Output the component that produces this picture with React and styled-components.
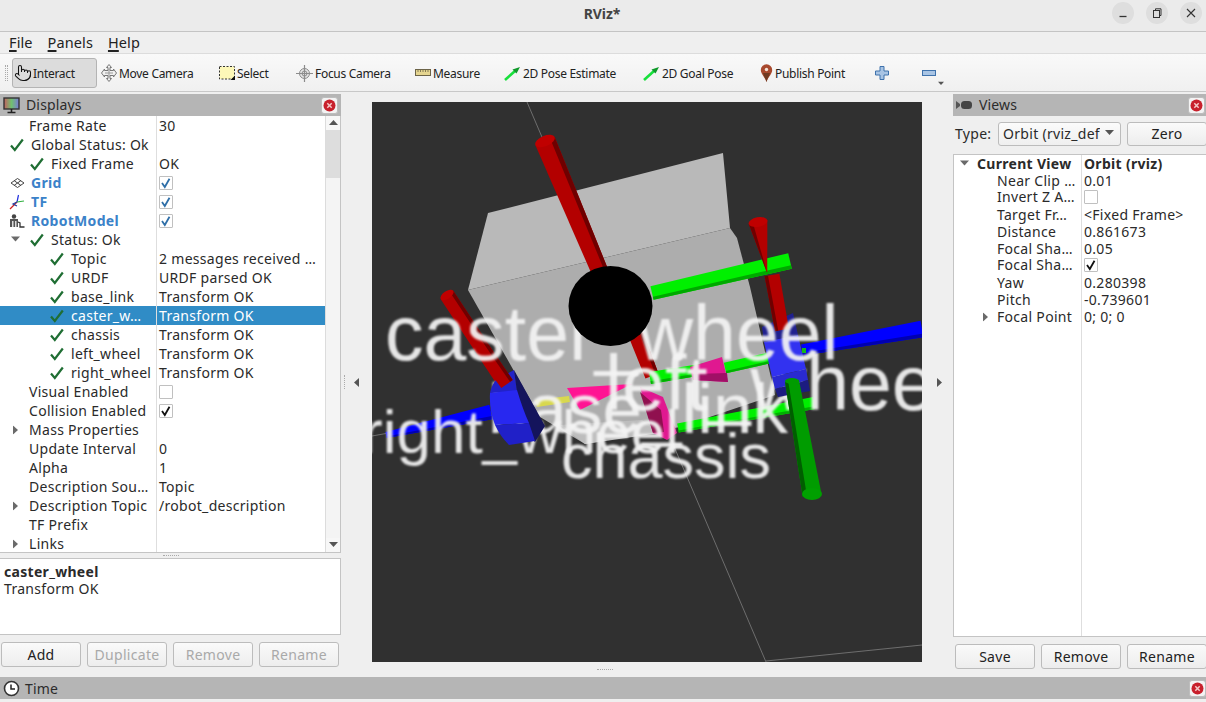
import React from "react";
import styled, { createGlobalStyle } from "styled-components";
import { Pointer } from "lucide-react";

const Global = createGlobalStyle`
  html, body { margin: 0; padding: 0; background: #efefef; overflow: hidden; }
  * { box-sizing: border-box; }
  #root { width: 1206px; height: 702px; overflow: hidden; }
`;

const Root = styled.div`
  width: 1206px; height: 702px; overflow: hidden; display: flex; flex-direction: column;
  font-family: "Noto Sans", "Open Sans", sans-serif; font-size: 14px; letter-spacing: .3px; color: #2a2a2a; background: #efefef;
`;
const TitleBar = styled.header`
  height: 32px; flex: none; background: #ebebeb; border-bottom: 1px solid #c4c4c4; position: relative;
  display: flex; align-items: center; justify-content: center; padding: 0 2px 4px 0; letter-spacing: 0;
`;
const Title = styled.div`
  font-weight: 700; font-size: 14px; color: #444; letter-spacing: -0.1px;
`;
const WinButtons = styled.div`
  position: absolute; right: 4px; top: 2px; display: flex; gap: 12px;
`;
const WinButton = styled.div`
  width: 22px; height: 22px; border-radius: 50%; background: #dedede; display: flex; align-items: center; justify-content: center;
`;
const MenuBar = styled.nav`
  height: 22px; flex: none; background: #efefef; border-bottom: 1px solid #dcdcdc; display: flex; gap: 15px; padding: 0 0 2px 9px; align-items: center;
  font-size: 14.5px; letter-spacing: .1px;
`;
const Menu = styled.span`
  color: #222; u { text-decoration-thickness: 2px; text-underline-offset: 2px; }
`;
const ToolBar = styled.div`
  height: 38px; flex: none; display: flex; align-items: center; padding: 1px 0 0 5px; border-bottom: 1px solid #c8c8c8;
  background: linear-gradient(#f9f9f9, #f0f0f0); font-size: 12px; letter-spacing: -.3px; color: #222;
`;
const Grip = styled.div`
  height: 16px; width: 3px; margin-right: 4px; border-left: 1px dotted #aaa; border-right: 1px dotted #aaa;
`;
const Tool = styled.div`
  width: ${p => p.$w}px; height: 30px; flex: none; display: flex; align-items: center; gap: ${p => p.$gap ?? 2}px; padding-left: ${p => p.$pad ?? 2}px;
  white-space: nowrap;
  ${p => p.$active && `background:#dcdcdc;border:1px solid #b4b4b4;border-radius:3px;`}
`;
const MoreTri = styled.span`
  align-self: flex-end; margin-bottom: 4px; display: flex;
  svg { width: 6px; height: 6px; }
`;
const Main = styled.div`
  width: 1208px; height: 585px; flex: none; display: flex; padding-top: 2px;
`;
const Dock = styled.section`
  width: ${p => p.$w}px; flex: none; display: flex; flex-direction: column;
`;
const DockTitle = styled.div`
  height: 22px; flex: none; background: #b5b5b5; display: flex; align-items: center; gap: 5px; padding: 0 0 0 3px; font-size: 14px; letter-spacing: .15px; color: #2c2c2c;
  justify-content: flex-start;
`;
const TitleText = styled.span`
  margin-top: ${p => p.$up ?? 2}px;
  margin-top: -${p => p.$up ?? 2}px;
`;
const CloseWrap = styled.div`
  margin-left: auto; margin-right: 3px; width: 17px; height: 17px; background: #f3f3f3; border: 1px solid #bdbdbd; border-radius: 3px;
  display: flex; align-items: center; justify-content: center;
`;
const TreeFrame = styled.div`
  flex: none; height: ${p => p.$h}px; background: #fff; border: 1px solid #c4c4c4; border-top: none; border-left: none; display: flex; overflow: hidden;
  ${p => p.$boxed && `border: 1px solid #c4c4c4;`}
`;
const Rows = styled.div`
  flex: 1; display: flex; flex-direction: column; min-width: 0; position: relative; margin-top: ${p => p.$top ?? 0}px;
`;
const Row = styled.div`
  height: ${p => p.$h}px; flex: none; display: grid; grid-template-columns: ${p => p.$col}px 1fr; align-items: center;
  background: ${p => (p.$sel ? "#308cc6" : "transparent")}; color: ${p => (p.$sel ? "#fff" : "inherit")}; white-space: nowrap;
`;
const FillRow = styled(Row)`
  flex: 1;
`;
const NameCell = styled.div`
  height: 100%; border-right: 1px solid #dedede; display: flex; align-items: center; position: relative; overflow: hidden;
  padding-left: ${p => p.$x}px; font-weight: ${p => (p.$bold ? 700 : 400)}; color: ${p => (p.$blue ? "#3b82c9" : "inherit")};
`;
const ValueCell = styled.div`
  height: 100%; display: flex; align-items: center; padding-left: 2px; font-weight: ${p => (p.$bold ? 700 : 400)};
`;
const IconSlot = styled.span`
  position: absolute; left: ${p => p.$x}px; top: 50%; transform: translateY(-50%); display: flex;
`;
const CheckBox = styled.span`
  width: 14px; height: 14px; background: #fff; border: 1px solid #c0c0c0; border-radius: 1px; display: flex; align-items: center; justify-content: center;
`;
const ScrollBar = styled.div`
  width: 15px; flex: none; display: flex; flex-direction: column; background: #f4f4f4; border-left: 1px solid #dcdcdc;
`;
const ScrollArrow = styled.div`
  height: 14px; flex: none; display: flex; align-items: center; justify-content: center; background: #f7f7f7;
`;
const Thumb = styled.div`
  height: 48px; flex: none; background: #dddddd;
`;
const ScrollGap = styled.div`
  flex: 1;
`;
const HSplit = styled.div`
  height: 5px; flex: none; display: flex; align-items: center; justify-content: center;
`;
const Dots = styled.div`
  width: 16px; height: 2px; border-top: 1px dotted #aaa;
`;
const Description = styled.div`
  height: 77px; flex: none; background: #fff; border: 1px solid #c4c4c4; border-left: none; padding: 4px 4px; line-height: 17px;
  b { display: block; font-weight: 700; }
`;
const ButtonRow = styled.div`
  display: flex; gap: 6px; padding: ${p => p.$pad};
`;
const Btn = styled.button`
  width: 80px; height: 25px; flex: none; border: 1px solid #bcbcbc; border-radius: 3px; background: linear-gradient(#fafafa, #ededed);
  font: inherit; letter-spacing: inherit; color: ${p => (p.disabled ? "#a9a9a9" : "#222")}; padding: 0;
`;
const TypeRow = styled.div`
  height: 24px; flex: none; margin: 6px 0 8px; display: flex; align-items: center; padding-left: 2px; gap: 6px;
`;
const TypeLabel = styled.span`
  width: 37px; flex: none; margin-top: -2px;
`;
const Combo = styled.div`
  width: 123px; height: 24px; flex: none; border: 1px solid #bcbcbc; border-radius: 3px; background: linear-gradient(#fbfbfb, #efefef); display: flex; align-items: center; gap: 5px; padding: 0 6px 2px 4px; overflow: hidden; white-space: nowrap;
  span { flex: 1; min-width: 0; overflow: hidden; }
`;
const ZeroBtn = styled(Btn)`
  height: 24px; padding-bottom: 2px;
`;
const Center = styled.div`
  width: 612px; flex: none; display: flex; flex-direction: column; padding-top: 8px;
`;
const CenterRow = styled.div`
  height: 560px; flex: none; display: flex;
`;
const SideSplit = styled.div`
  width: 31px; flex: none; display: flex; align-items: center; gap: 8px; padding-left: ${p => p.$pad}px;
`;
const VGrip = styled.div`
  height: 14px; width: 1px; border-left: 1px dotted #aaa;
`;
const Viewport = styled.div`
  width: 550px; height: 560px; flex: none; background: #303030; overflow: hidden;
`;
const SceneSvg = styled.svg`
  display: block;
`;
const BottomHandle = styled.div`
  flex: 1; display: flex; align-items: center; justify-content: center; padding-right: 84px;
`;
const TimeBar = styled(DockTitle)`
  width: 1206px;
  ${CloseWrap} { margin-right: 0; }
`;

const Check = ({ c = "#1f6e33", s = 14 }) => (
  <svg width={s} height={s} viewBox="0 0 14 14"><path d="M1 7.5 L4.8 12 L12.8 1.5" fill="none" stroke={c} strokeWidth="2.2" /></svg>
);
const Box = ({ on, c = "#2f6fa8" }) => (
  <CheckBox>{on && <svg width="12" height="12" viewBox="0 0 12 12"><path d="M2 6 L4.8 10 L9.5 1.8" fill="none" stroke={c} strokeWidth="1.8" /></svg>}</CheckBox>
);
const Tri = ({ dir, c = "#6a6a6a" }) => {
  const d = { down: "M0 1 H9 L4.5 6 Z", right: "M2 0 L7 4.5 L2 9 Z", left: "M6 0 V9 L1 4.5 Z", up: "M0 6 H9 L4.5 1 Z" }[dir];
  return <svg width="9" height="9" viewBox="0 0 9 9"><path d={d} fill={c} /></svg>;
};
const Close = () => (
  <CloseWrap>
    <svg width="13" height="13" viewBox="0 0 13 13">
      <circle cx="6.5" cy="6.5" r="6" fill="#c8202c" />
      <path d="M4.3 4.3 L8.7 8.7 M8.7 4.3 L4.3 8.7" stroke="#f4c8c8" strokeWidth="1.5" />
    </svg>
  </CloseWrap>
);
const MonitorIcon = () => (
  <svg width="18" height="17" viewBox="0 0 18 17">
    <defs><linearGradient id="mon" x1="0" x2="1"><stop offset="0" stopColor="#c46060" /><stop offset=".5" stopColor="#70c070" /><stop offset="1" stopColor="#7a7ad8" /></linearGradient></defs>
    <rect x="1" y="1" width="15" height="11" fill="url(#mon)" stroke="#333" strokeWidth="1.4" />
    <path d="M8.5 12 V15 M4.5 15.5 H12.5" stroke="#222" strokeWidth="1.6" />
  </svg>
);
const ClockIcon = () => (
  <svg width="17" height="17" viewBox="0 0 17 17"><circle cx="8.5" cy="8.5" r="7" fill="#fff" stroke="#333" strokeWidth="1.6" /><path d="M8 4.5 V9 H12" fill="none" stroke="#222" strokeWidth="1.5" /></svg>
);
const CameraIcon = () => (
  <svg width="18" height="14" viewBox="0 0 18 14"><path d="M0 3 L4 6 V8 L0 11 Z" fill="#555" /><rect x="5" y="3" width="11" height="8" rx="3.5" fill="#444" /></svg>
);
const MoveIcon = () => (
  <svg width="16" height="18" viewBox="0 0 16 18" fill="none" stroke="#777" strokeWidth="1">
    <path d="M8 .5 L10.5 3.5 H9 V6.5 H12.5 V5 L15.5 9 L12.5 13 V11.5 H9 V14.5 H10.5 L8 17.5 L5.5 14.5 H7 V11.5 H3.5 V13 L.5 9 L3.5 5 V6.5 H7 V3.5 H5.5 Z" fill="#f1f1f1" />
    <path d="M4 9 H12 M8 5 V13" stroke="#999" />
  </svg>
);
const SelectIcon = () => (
  <svg width="16" height="14" viewBox="0 0 16 14">
    <rect x=".5" y=".5" width="15" height="12.5" fill="#fdf8b8" stroke="#333" strokeDasharray="2 1.5" />
    <path d="M16 9.5 V14 H11.5 Z" fill="#111" />
  </svg>
);
const FocusIcon = () => (
  <svg width="17" height="17" viewBox="0 0 17 17" fill="none" stroke="#8c8c8c">
    <circle cx="8.5" cy="8.5" r="5" fill="#e4e4e4" />
    <path d="M8.5 0 V17 M0 8.5 H17" strokeWidth="1.2" />
    <circle cx="8.5" cy="8.5" r="2.5" />
  </svg>
);
const MeasureIcon = () => (
  <svg width="16" height="8" viewBox="0 0 16 8">
    <rect x=".5" y=".5" width="15" height="6" fill="#e5d590" stroke="#6c6448" />
    <path d="M3 1 V3 M5.5 1 V3 M8 1 V3 M10.5 1 V3 M13 1 V3" stroke="#6c6448" strokeWidth=".8" />
  </svg>
);
const PoseIcon = () => (
  <svg width="17" height="15" viewBox="0 0 17 15">
    <path d="M1 14 L11 5" stroke="#18e03c" strokeWidth="2.6" />
    <path d="M16 1 L8.5 3.5 L12.5 7.5 Z" fill="#0f9a2a" />
  </svg>
);
const PinIcon = () => (
  <svg width="13" height="18" viewBox="0 0 13 18">
    <path d="M6.5 18 C5 13 .8 10 .8 6 A5.7 5.7 0 0 1 12.2 6 C12.2 10 8 13 6.5 18 Z" fill="#a8492e" />
    <path d="M6.5 18 C5.6 14 3.5 12 3 9 H10 C9.5 12 7.4 14 6.5 18 Z" fill="#6f3a22" />
    <circle cx="6.5" cy="5.5" r="1.7" fill="#f3e4d8" />
  </svg>
);
const PlusIcon = () => (
  <svg width="14" height="14" viewBox="0 0 14 14"><path d="M5 .5 H9 V5 H13.5 V9 H9 V13.5 H5 V9 H.5 V5 H5 Z" fill="#a8c4e4" stroke="#3f72ac" /></svg>
);
const MinusIcon = () => (
  <svg width="14" height="6" viewBox="0 0 14 6"><rect x=".5" y=".5" width="13" height="5" fill="#a8c4e4" stroke="#3f72ac" /></svg>
);
const GridIcon = () => (
  <svg width="15" height="11" viewBox="0 0 15 11" fill="none" stroke="#444"><path d="M7.5 1 L14 5.5 L7.5 10 L1 5.5 Z M4.2 3.2 L10.8 7.8 M10.8 3.2 L4.2 7.8" /></svg>
);
const TfIcon = () => (
  <svg width="16" height="16" viewBox="0 0 16 16" fill="none" strokeWidth="1.2">
    <path d="M8 8 L9.5 1" stroke="#2030e0" /><path d="M8 8 L15 7" stroke="#30b040" />
    <path d="M8 8 L1 15" stroke="#d02020" /><path d="M8 8 L4 10 L8 12" stroke="#2040a0" />
  </svg>
);
const RobotIcon = () => (
  <svg width="16" height="16" viewBox="0 0 16 16">
    <circle cx="5" cy="3.5" r="2.2" fill="#444" /><rect x="1" y="6" width="8" height="8" fill="#555" />
    <rect x="3" y="8" width="1.5" height="6" fill="#ddd" /><rect x="6" y="8" width="1.5" height="6" fill="#ddd" />
    <path d="M9 9 L11 10 V14 H15.5" fill="none" stroke="#333" strokeWidth="1.3" />
  </svg>
);

const Cyl = ({ a, b, wa, wb, main, dark, cap, capRy, flip }) => {
  const dx = b[0] - a[0], dy = b[1] - a[1], l = Math.hypot(dx, dy), nx = -dy / l, ny = dx / l;
  const pt = (p, w, t) => `${p[0] + nx * w * t},${p[1] + ny * w * t}`;
  const strip = (t1, t2) => `${pt(a, wa, t1)} ${pt(b, wb, t1)} ${pt(b, wb, t2)} ${pt(a, wa, t2)}`;
  const ang = (Math.atan2(ny, nx) * 180) / Math.PI;
  return (
    <g>
      <polygon points={strip(-0.5, 0.5)} fill={main} />
      <polygon points={flip ? strip(-0.5, -0.27) : strip(0.27, 0.5)} fill={dark} />
      {cap && <ellipse cx={a[0]} cy={a[1]} rx={wa / 2} ry={capRy ?? wa / 4} fill={cap} transform={`rotate(${ang} ${a[0]} ${a[1]})`} />}
    </g>
  );
};
const RED = { main: "#b30000", dark: "#6f0000" };
const GREEN = { main: "#00f000", dark: "#00b000" };
const BLUE = { main: "#0000ff", dark: "#0000b0" };

const Label = styled.text`
  fill: #f4f4f4; opacity: .93; font-family: "Liberation Sans", sans-serif; font-size: ${p => p.$s}px; letter-spacing: 0;
`;

const Scene = () => (
  <SceneSvg width="550" height="560" viewBox="372 102 550 560">
    <defs><filter id="soft" x="-5%" y="-20%" width="110%" height="140%"><feGaussianBlur stdDeviation="0.9" /></filter></defs>
    <g stroke="#6e6e6e" strokeWidth="1">
      <line x1="527" y1="102" x2="766" y2="662" />
      <line x1="766" y1="661" x2="922" y2="645" />
      <line x1="372" y1="436" x2="400" y2="431" />
    </g>
    <polygon points="488,213 723,153 730,228 468,290" fill="#b9b9b9" />
    <polygon points="468,290 730,228 737,238 750,287 775,395 680,427 585,444 540,417" fill="#adadad" />
    <polygon points="585,444 660,433 642,420 560,425" fill="#bdbdbd" />
    <Cyl a={[545, 141]} b={[600, 272]} wa={21} wb={17} {...RED} cap="#c00000" flip />
    <Cyl a={[636, 335]} b={[652, 376]} wa={15} wb={14} {...RED} flip />
    <Cyl a={[447, 295]} b={[503, 380]} wa={15} wb={15} {...RED} cap="#c00000" flip />
    <Cyl a={[386, 435]} b={[491, 412]} wa={6} wb={15} {...BLUE} />
    <polygon points="535,400 569,396 570,402 537,407" fill="#d8d84e" />
    <polygon points="567,388 632,384 580,410" fill="#ff1493" />
    <polygon points="640,387 663,397 677,433 667,440 653,433" fill="#e01890" />
    <polygon points="640,392 661,410 664,432 653,433" fill="#90104f" />
    <Cyl a={[678, 428]} b={[814, 403]} wa={9} wb={12} {...GREEN} />
    <Cyl a={[650, 378]} b={[723, 366]} wa={12} wb={11} {...GREEN} />
    <Cyl a={[725, 368]} b={[769, 358]} wa={11} wb={11} {...GREEN} />
    <polygon points="690,367 722,357 728,382 693,380" fill="#e01890" />
    <polygon points="693,374 727,373 728,382 693,380" fill="#a01066" />
    <Cyl a={[802, 350]} b={[922, 329]} wa={11} wb={17} {...BLUE} />
    <rect x="802" y="348" width="4" height="5" fill="#14b814" />

    <g filter="url(#soft)">
      <Label $s={71} x="488" y="433">base_link</Label>
      <Label $s={62} x="362" y="453">right_wheel</Label>
      <Label $s={77} x="605" y="410">left_wheel</Label>
    </g>

    {/* left wheel */}
    <path d="M514,370 L545,426 L535,442 L530,437 Q522,412 517,392 Z" fill="#14145c" />
    <path d="M490,393 Q492,384 496,380 L514,370 L517,392 Z" fill="#2222c8" />
    <path d="M490,393 L517,390 Q523,410 529,423 L495,425 Q489,410 490,393 Z" fill="#2828f0" />
    <path d="M495,425 L529,423 L535,441 L509,445 Q500,436 495,425 Z" fill="#2020c8" />
    <Cyl a={[490, 360]} b={[507, 384]} wa={15} wb={14} {...RED} flip />

    {/* right wheel */}
    <polygon points="762,327 793,313 798,335 764,342" fill="#20208e" />
    <polygon points="764,342 798,335 806,369 772,377" fill="#3232f0" />
    <polygon points="772,377 806,369 808,380 775,389" fill="#2a2ad0" />
    <polygon points="775,389 808,380 810,391 778,397" fill="#1c1c80" />
    <Cyl a={[772, 275]} b={[782, 330]} wa={15} wb={14} {...RED} />
    <Cyl a={[652, 293]} b={[790, 261]} wa={14} wb={16} main="#00f000" dark="#00a800" />
    <Cyl a={[758, 222]} b={[767, 272]} wa={19} wb={0.5} {...RED} cap="#c00000" />
    <Cyl a={[792, 381]} b={[812, 495]} wa={14} wb={19} main="#009c00" dark="#005f00" />
    <ellipse cx="812" cy="494" rx="10" ry="6" fill="#00a000" />
    <ellipse cx="792" cy="381" rx="7" ry="3" fill="#009c00" />

    <g filter="url(#soft)">
      <Label $s={77} x="385" y="360">caster_wheel</Label>
    </g>
    <ellipse cx="610.5" cy="306" rx="42" ry="40" fill="#000" />
    <g filter="url(#soft)">
      <Label $s={63} x="561" y="478">chassis</Label>
    </g>
  </SceneSvg>
);

const displays = [
  { n: "Frame Rate", x: 29, v: "30" },
  { n: "Global Status: Ok", x: 31, c: 10 },
  { n: "Fixed Frame", x: 51, c: 30, v: "OK" },
  { n: "Grid", x: 31, bold: 1, blue: 1, icon: <GridIcon />, ix: 10, box: 1, on: 1 },
  { n: "TF", x: 31, bold: 1, blue: 1, icon: <TfIcon />, ix: 9, box: 1, on: 1 },
  { n: "RobotModel", x: 31, bold: 1, blue: 1, icon: <RobotIcon />, ix: 9, box: 1, on: 1 },
  { n: "Status: Ok", x: 51, c: 30, tri: "down", tx: 11 },
  { n: "Topic", x: 71, c: 50, v: "2 messages received …" },
  { n: "URDF", x: 71, c: 50, v: "URDF parsed OK" },
  { n: "base_link", x: 71, c: 50, v: "Transform OK" },
  { n: "caster_w…", x: 71, c: 50, v: "Transform OK", sel: 1 },
  { n: "chassis", x: 71, c: 50, v: "Transform OK" },
  { n: "left_wheel", x: 71, c: 50, v: "Transform OK" },
  { n: "right_wheel", x: 71, c: 50, v: "Transform OK" },
  { n: "Visual Enabled", x: 29, box: 1 },
  { n: "Collision Enabled", x: 29, box: 1, on: 1, bc: "#111" },
  { n: "Mass Properties", x: 29, tri: "right", tx: 11 },
  { n: "Update Interval", x: 29, v: "0" },
  { n: "Alpha", x: 29, v: "1" },
  { n: "Description Sou…", x: 29, v: "Topic" },
  { n: "Description Topic", x: 29, tri: "right", tx: 11, v: "/robot_description" },
  { n: "TF Prefix", x: 29 },
  { n: "Links", x: 29, tri: "right", tx: 11 },
];
const views = [
  { n: "Current View", x: 23, bold: 1, tri: "down", tx: 6, v: "Orbit (rviz)", vb: 1 },
  { n: "Near Clip …", x: 43, v: "0.01" },
  { n: "Invert Z A…", x: 43, box: 1 },
  { n: "Target Fr…", x: 43, v: "<Fixed Frame>" },
  { n: "Distance", x: 43, v: "0.861673" },
  { n: "Focal Sha…", x: 43, v: "0.05" },
  { n: "Focal Sha…", x: 43, box: 1, on: 1, bc: "#111" },
  { n: "Yaw", x: 43, v: "0.280398" },
  { n: "Pitch", x: 43, v: "-0.739601" },
  { n: "Focal Point", x: 43, tri: "right", tx: 27, v: "0; 0; 0" },
];

const TreeRow = ({ r, h, col }) => (
  <Row $h={h} $col={col} $sel={r.sel}>
    <NameCell $x={r.x} $bold={r.bold} $blue={r.blue}>
      {r.tri && <IconSlot $x={r.tx}><Tri dir={r.tri} /></IconSlot>}
      {r.c != null && <IconSlot $x={r.c}><Check /></IconSlot>}
      {r.icon && <IconSlot $x={r.ix}>{r.icon}</IconSlot>}
      {r.n}
    </NameCell>
    <ValueCell $bold={r.vb}>{r.box ? <Box on={r.on} c={r.bc} /> : r.v}</ValueCell>
  </Row>
);

export default function App() {
  return (
    <Root>
      <Global />
      <TitleBar>
        <Title>RViz*</Title>
        <WinButtons>
          <WinButton><svg width="10" height="10" viewBox="0 0 10 10"><path d="M1.5 8.5 H8.5" stroke="#333" strokeWidth="1.3" /></svg></WinButton>
          <WinButton><svg width="10" height="10" viewBox="0 0 10 10" fill="none" stroke="#333"><rect x="1.5" y="2.5" width="6" height="7" /><path d="M3.5 2 V.8 H9 V7.5 H8" /></svg></WinButton>
          <WinButton><svg width="10" height="10" viewBox="0 0 10 10"><path d="M1 1 L9 9 M9 1 L1 9" stroke="#333" strokeWidth="1.1" /></svg></WinButton>
        </WinButtons>
      </TitleBar>
      <MenuBar>
        <Menu><u>F</u>ile</Menu>
        <Menu><u>P</u>anels</Menu>
        <Menu><u>H</u>elp</Menu>
      </MenuBar>
      <ToolBar>
        <Grip />
        <Tool $w={85} $active $pad={1} $gap={1}><Pointer size={18} strokeWidth={1.4} color="#111" />Interact</Tool>
        <Tool $w={2} $pad={0} />
        <Tool $w={118}><MoveIcon />Move Camera</Tool>
        <Tool $w={77}><SelectIcon />Select</Tool>
        <Tool $w={119}><FocusIcon />Focus Camera</Tool>
        <Tool $w={89}><MeasureIcon />Measure</Tool>
        <Tool $w={139}><PoseIcon />2D Pose Estimate</Tool>
        <Tool $w={117}><PoseIcon />2D Goal Pose</Tool>
        <Tool $w={115}><PinIcon />Publish Point</Tool>
        <Tool $w={47}><PlusIcon /></Tool>
        <Tool $w={18}><MinusIcon /></Tool>
        <MoreTri><Tri dir="down" c="#555" /></MoreTri>
      </ToolBar>
      <Main>
        <Dock $w={341}>
          <DockTitle><MonitorIcon /><TitleText>Displays</TitleText><Close /></DockTitle>
          <TreeFrame $h={437}>
            <Rows>{displays.map((r, i) => <TreeRow key={i} r={r} h={19} col={157} />)}</Rows>
            <ScrollBar>
              <ScrollArrow><Tri dir="up" c="#555" /></ScrollArrow>
              <Thumb />
              <ScrollGap />
              <ScrollArrow><Tri dir="down" c="#555" /></ScrollArrow>
            </ScrollBar>
          </TreeFrame>
          <HSplit><Dots /></HSplit>
          <Description><b>caster_wheel</b>Transform OK</Description>
          <ButtonRow $pad="7px 0 0 1px">
            <Btn>Add</Btn>
            <Btn disabled>Duplicate</Btn>
            <Btn disabled>Remove</Btn>
            <Btn disabled>Rename</Btn>
          </ButtonRow>
        </Dock>
        <Center>
          <CenterRow>
            <SideSplit $pad={3}><VGrip /><Tri dir="left" c="#555" /></SideSplit>
            <Viewport><Scene /></Viewport>
            <SideSplit $pad={13}><Tri dir="right" c="#555" /></SideSplit>
          </CenterRow>
          <BottomHandle><Dots /></BottomHandle>
        </Center>
        <Dock $w={255}>
          <DockTitle><CameraIcon /><TitleText>Views</TitleText><Close /></DockTitle>
          <TypeRow><TypeLabel>Type:</TypeLabel><Combo><span>Orbit (rviz_default_plugins/Orbit)</span><Tri dir="down" c="#555" /></Combo><ZeroBtn>Zero</ZeroBtn></TypeRow>
          <TreeFrame $h={483} $boxed>
            <Rows $top={-1}>
              {views.map((r, i) => <TreeRow key={i} r={r} h={17} col={128} />)}
              <FillRow $h={0} $col={128}><NameCell $x={0} /><ValueCell /></FillRow>
            </Rows>
          </TreeFrame>
          <ButtonRow $pad="7px 0 0 2px">
            <Btn>Save</Btn>
            <Btn>Remove</Btn>
            <Btn>Rename</Btn>
          </ButtonRow>
        </Dock>
      </Main>
      <TimeBar><ClockIcon /><TitleText $up={0}>Time</TitleText><Close /></TimeBar>
    </Root>
  );
}
